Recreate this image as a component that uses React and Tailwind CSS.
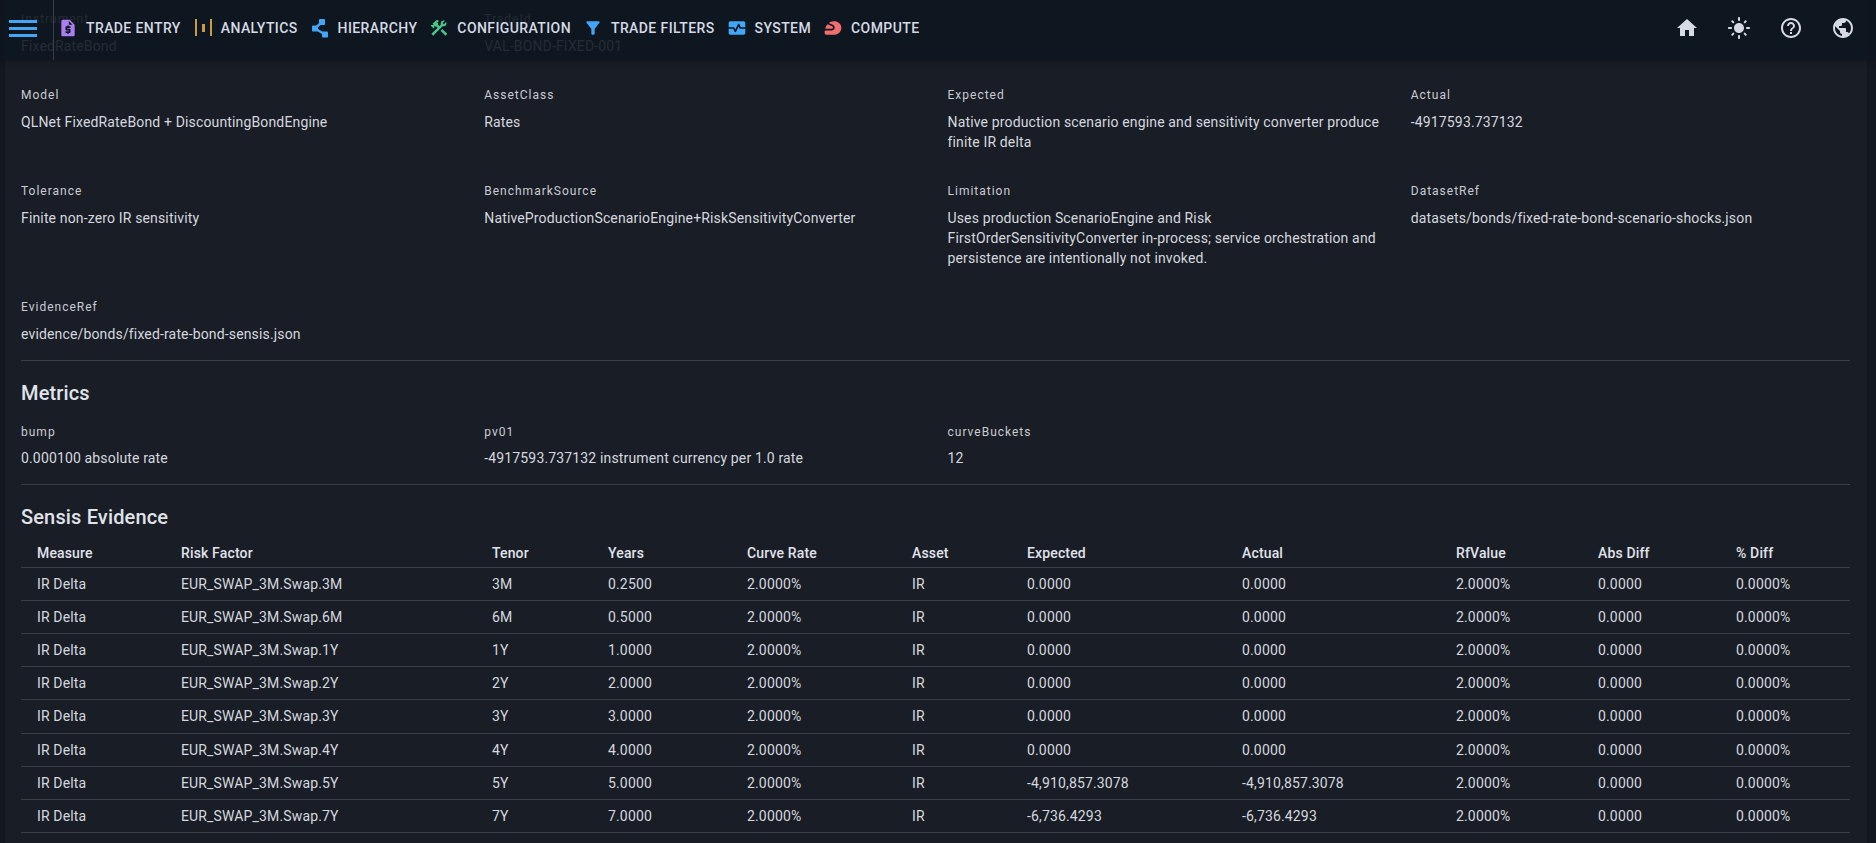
import React from 'react'
import {
  MdRequestQuote,
  MdConstruction,
  MdFilterAlt,
  MdMonitorHeart,
  MdSportsMotorsports,
  MdHome,
  MdLightMode,
  MdHelpOutline,
  MdPublic,
} from 'react-icons/md'

const rows = [
  ['3M', '0.2500', '0.0000', '0.0000'],
  ['6M', '0.5000', '0.0000', '0.0000'],
  ['1Y', '1.0000', '0.0000', '0.0000'],
  ['2Y', '2.0000', '0.0000', '0.0000'],
  ['3Y', '3.0000', '0.0000', '0.0000'],
  ['4Y', '4.0000', '0.0000', '0.0000'],
  ['5Y', '5.0000', '-4,910,857.3078', '-4,910,857.3078'],
  ['7Y', '7.0000', '-6,736.4293', '-6,736.4293'],
]

const columns = ['Measure', 'Risk Factor', 'Tenor', 'Years', 'Curve Rate', 'Asset', 'Expected', 'Actual', 'RfValue', 'Abs Diff', '% Diff']
const widths = ['w-[144px]', 'w-[311px]', 'w-[116px]', 'w-[139px]', 'w-[165px]', 'w-[115px]', 'w-[215px]', 'w-[214px]', 'w-[142px]', 'w-[138px]', '']

function CandleIcon() {
  return (
    <svg width="24" height="24" viewBox="0 0 24 24" fill="none">
      <rect x="4" y="3" width="2" height="17" fill="#c89b4a" />
      <rect x="11" y="8" width="3" height="8" fill="#c89b4a" />
      <rect x="19" y="3" width="2" height="17" fill="#c89b4a" />
    </svg>
  )
}

function HierarchyIcon() {
  return (
    <svg width="24" height="24" viewBox="0 0 24 24" fill="#42a5f5">
      <path d="M7 12.5L14 6M7 12.5L17 18.5" stroke="#42a5f5" strokeWidth="2.4" fill="none" />
      <rect x="4" y="9.5" width="6" height="6" rx="1" />
      <rect x="11" y="3" width="6" height="6" rx="1" />
      <rect x="14" y="15.5" width="6" height="6" rx="1" />
    </svg>
  )
}

function NavItem({ icon, label }) {
  return (
    <div className="flex items-center gap-[6px]">
      <span className="flex w-6 justify-center">{icon}</span>
      <span className="text-sm font-medium tracking-[0.4px] text-[#d5dae5]">{label}</span>
    </div>
  )
}

function Field({ label, children, tight }) {
  return (
    <div>
      <div className="text-xs leading-5 tracking-[1px] text-[#c9ccd4]">{label}</div>
      <div className={`${tight ? 'mt-[6px]' : 'mt-[7px]'} text-sm leading-5 tracking-[0.15px] text-[#d5d8df]`}>{children}</div>
    </div>
  )
}

export default function App() {
  return (
    <div className="relative h-[843px] w-full overflow-hidden bg-[#131720] pl-[5px] pr-[9px] font-['Roboto',sans-serif]">
      {/* top bar lies over the scrolled page */}
      <div className="absolute left-0 right-0 top-0 z-10 flex h-[60px] items-center bg-[#0e151e]/[0.89] pb-[4px] pr-[21px] shadow-[0_2px_4px_rgba(0,0,0,0.2)]">
        <div className="ml-[9px] flex w-[28px] flex-col gap-[4px]">
          <div className="h-[3px] bg-[#42a5f5]" />
          <div className="h-[3px] bg-[#42a5f5]" />
          <div className="h-[3px] bg-[#42a5f5]" />
        </div>
        <div className="absolute left-[53px] top-0 h-[60px] w-px bg-[#3a3f4a]" />
        <div className="ml-[19px] flex items-center gap-[10px]">
          <NavItem icon={<MdRequestQuote size={20} className="text-[#a97ff0]" />} label="TRADE ENTRY" />
          <NavItem icon={<CandleIcon />} label="ANALYTICS" />
          <NavItem icon={<HierarchyIcon />} label="HIERARCHY" />
          <NavItem icon={<MdConstruction size={20} className="text-[#4cc38a]" />} label="CONFIGURATION" />
          <NavItem icon={<MdFilterAlt size={20} className="text-[#42a5f5]" />} label="TRADE FILTERS" />
          <NavItem icon={<MdMonitorHeart size={20} className="text-[#42a5f5]" />} label="SYSTEM" />
          <NavItem icon={<MdSportsMotorsports size={20} className="text-[#f26d6d]" />} label="COMPUTE" />
        </div>
        <div className="ml-auto flex items-center gap-[28px] text-[#d5dae5]">
          <MdHome size={24} />
          <MdLightMode size={24} />
          <MdHelpOutline size={24} />
          <MdPublic size={24} />
        </div>
      </div>

      <div className="h-full bg-[#191d26] pl-4 pr-[17px] pt-[9px]">
        <div className="grid grid-cols-4 gap-x-6 gap-y-[29px]">
          <Field label="Instrument">FixedRateBond</Field>
          <Field label="TradeId">VAL-BOND-FIXED-001</Field>
          <div />
          <div />
          <Field label="Model">QLNet FixedRateBond + DiscountingBondEngine</Field>
          <Field label="AssetClass">Rates</Field>
          <Field label="Expected">Native production scenario engine and sensitivity converter produce finite IR delta</Field>
          <Field label="Actual">-4917593.737132</Field>
          <Field label="Tolerance">Finite non-zero IR sensitivity</Field>
          <Field label="BenchmarkSource">NativeProductionScenarioEngine+RiskSensitivityConverter</Field>
          <Field label="Limitation">Uses production ScenarioEngine and Risk FirstOrderSensitivityConverter in-process; service orchestration and persistence are intentionally not invoked.</Field>
          <Field label="DatasetRef">datasets/bonds/fixed-rate-bond-scenario-shocks.json</Field>
          <Field label="EvidenceRef">evidence/bonds/fixed-rate-bond-sensis.json</Field>
        </div>

        <div className="mt-[16px] border-t border-[#3a3e48]" />
        <h2 className="mt-[16px] text-xl font-medium leading-8 tracking-[0.15px] text-[#e0e3ea]">Metrics</h2>
        <div className="mt-[13px] grid grid-cols-4 gap-x-6">
          <Field tight label="bump">0.000100 absolute rate</Field>
          <Field tight label="pv01">-4917593.737132 instrument currency per 1.0 rate</Field>
          <Field tight label="curveBuckets">12</Field>
        </div>

        <div className="mt-[16px] border-t border-[#3a3e48]" />
        <h2 className="mt-[16px] text-xl font-medium leading-8 tracking-[0.15px] text-[#e0e3ea]">Sensis Evidence</h2>

        <table className="mt-[2px] w-full table-fixed border-collapse text-sm tracking-[0.15px] text-[#d5d8df]">
          <thead>
            <tr className="h-[32px] border-b border-[#3a3e48]">
              {columns.map((c, i) => (
                <th key={c} className={`${widths[i]} px-4 pt-[4px] text-left font-medium text-[#e0e3ea]`}>
                  {c}
                </th>
              ))}
            </tr>
          </thead>
          <tbody>
            {rows.map((r) => (
              <tr key={r[0]} className={`${r[0] === '3Y' ? 'h-[34px]' : 'h-[33px]'} border-b border-[#3a3e48]`}>
                <td className="px-4">IR Delta</td>
                <td className="px-4">EUR_SWAP_3M.Swap.{r[0]}</td>
                <td className="px-4">{r[0]}</td>
                <td className="px-4">{r[1]}</td>
                <td className="px-4">2.0000%</td>
                <td className="px-4">IR</td>
                <td className="px-4">{r[2]}</td>
                <td className="px-4">{r[3]}</td>
                <td className="px-4">2.0000%</td>
                <td className="px-4">0.0000</td>
                <td className="px-4">0.0000%</td>
              </tr>
            ))}
          </tbody>
        </table>
      </div>
    </div>
  )
}
